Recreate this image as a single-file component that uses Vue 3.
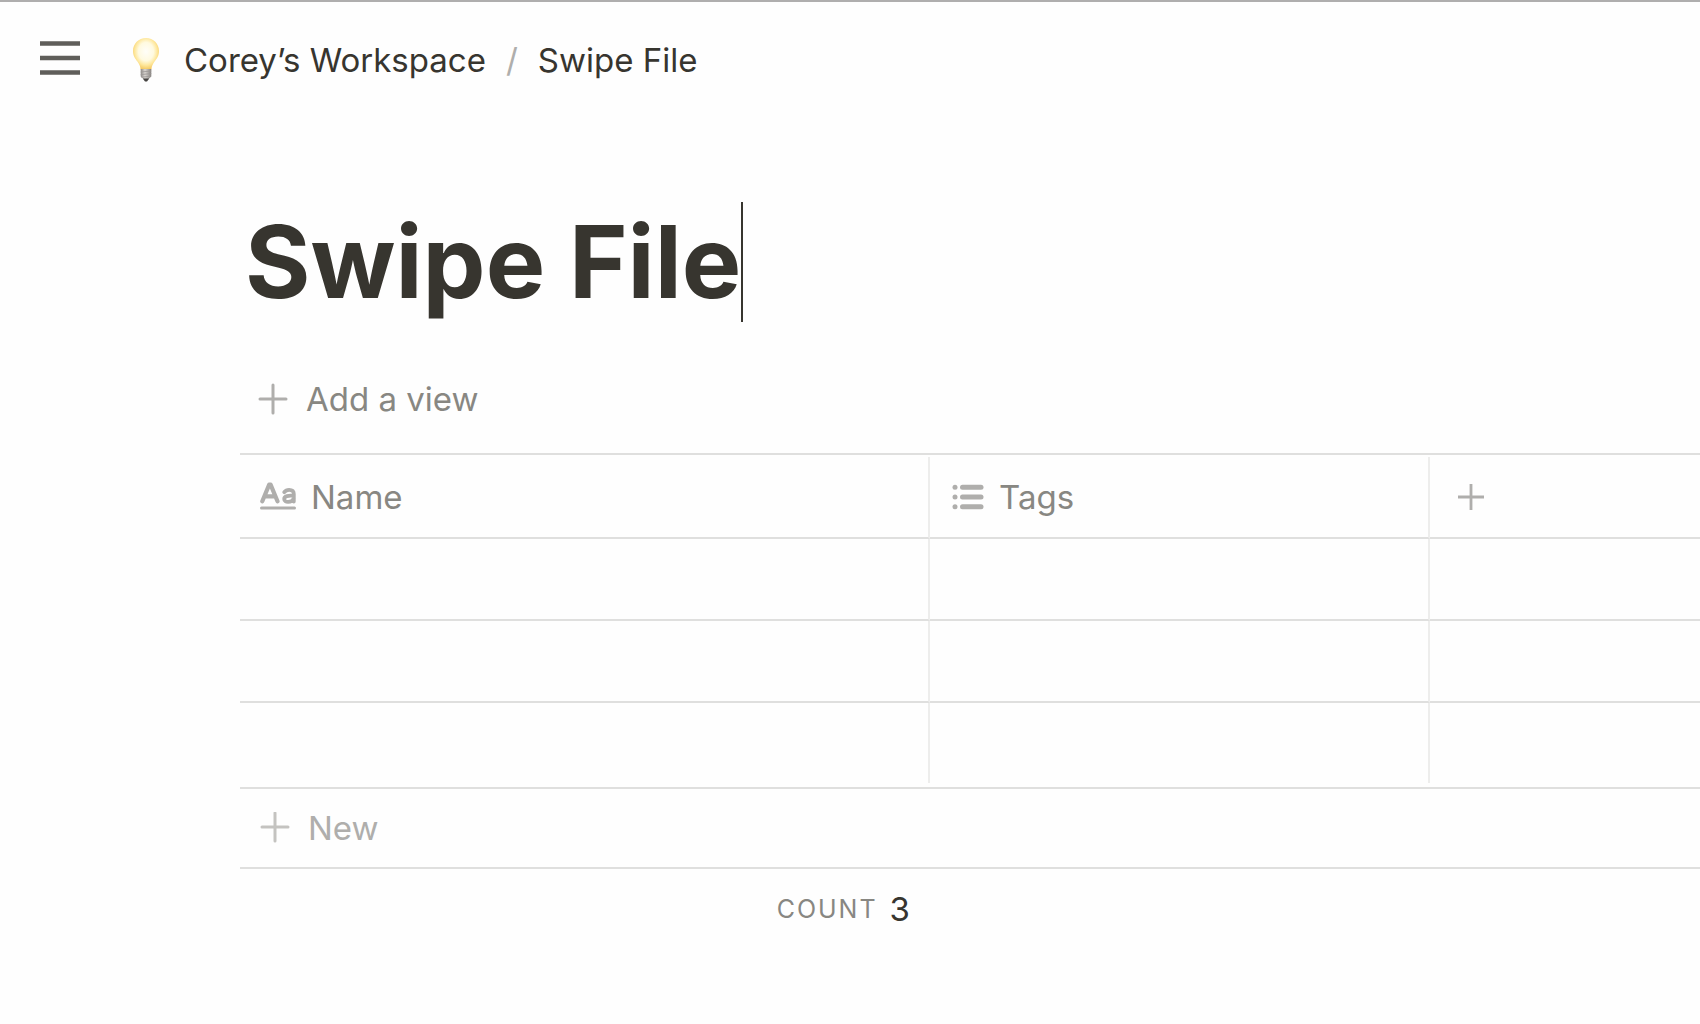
<template>
  <div class="page">
    <header class="topbar">
      <button class="menu-button" type="button" aria-label="Open sidebar">
        <svg width="40" height="34" viewBox="0 0 40 34">
          <path d="M0 2.500h40M0 17h40M0 31.500h40" stroke="#5f5e5a" stroke-width="4.400" />
        </svg>
      </button>
      <nav class="breadcrumb" aria-label="Breadcrumb">
        <a href="#" class="crumb">
          <svg class="bulb" width="28" height="46" viewBox="0 0 28 46">
            <defs>
              <radialGradient id="glass" cx="50%" cy="43%" r="58%">
                <stop offset="0" stop-color="#fffef9" />
                <stop offset="0.5" stop-color="#fffae0" />
                <stop offset="0.75" stop-color="#fee79b" />
                <stop offset="1" stop-color="#f4c65c" />
              </radialGradient>
              <linearGradient id="screw" x1="0" x2="1" y1="0" y2="0">
                <stop offset="0" stop-color="#8d8986" />
                <stop offset="0.4" stop-color="#d9d5d1" />
                <stop offset="1" stop-color="#85817e" />
              </linearGradient>
            </defs>
            <path d="M14 1C6.600 1 1 6.800 1 14c0 4.800 2.200 7.600 4.400 10.600C7.400 27.300 8.200 29 8.600 32.500h10.800c.4-3.500 1.200-5.200 3.200-7.900C24.800 21.600 27 18.800 27 14 27 6.800 21.400 1 14 1z" fill="url(#glass)" />
            <path d="M8.700 32h10.600v7.600l-3.200 2.800h-4.200l-3.200-2.800z" fill="url(#screw)" />
            <path d="M8.700 35l10.600-1M8.700 37.600l10.600-1M9.200 40.200l9.600-1" stroke="#9b9794" stroke-width="0.8" />
            <path d="M10.800 41.500h6.400L15 44.500h-2z" fill="#454341" />
          </svg>
          <span>Corey’s Workspace</span>
        </a>
        <span class="slash">/</span>
        <a href="#" class="crumb">Swipe File</a>
      </nav>
    </header>

    <main class="content">
      <h1 class="title">Swipe File<span class="caret"></span></h1>

      <button class="add-view" type="button">
        <svg width="30" height="32" viewBox="0 0 30 32">
          <path d="M2 16h26M15 2v28" stroke="#afaeac" stroke-width="3" stroke-linecap="round" />
        </svg>
        Add a view
      </button>

      <div class="table-wrap">
        <table class="table">
          <thead>
            <tr>
              <th class="col-name" scope="col">
                <div class="head">
                  <svg width="36" height="30" viewBox="0 0 36 30">
                    <g fill="none" stroke="#afaeac" stroke-width="4.200" stroke-linecap="round" stroke-linejoin="round">
                      <path d="M2.300 19.300L9.200 2.600h1.400L17.500 19.300M5.500 14.300h9" />
                      <path d="M24.300 10.200c1.300-1.800 3-2.300 4.800-2.300 3.200 0 4.700 1.600 4.700 4.200v7.400M33.800 13.800c-5.600-.5-9.600.2-9.600 3.200 0 4 7.400 3.800 9.600-.4" stroke-width="3.800" />
                      <path d="M1.500 26h33" stroke-width="3" />
                    </g>
                  </svg>
                  Name
                </div>
              </th>
              <th class="col-tags" scope="col">
                <div class="head">
                  <svg width="32" height="26" viewBox="0 0 32 26">
                    <g fill="#afaeac">
                      <circle cx="3" cy="3.300" r="2.500" />
                      <circle cx="3" cy="13" r="2.500" />
                      <circle cx="3" cy="22.700" r="2.500" />
                      <rect x="8" y="0.800" width="23.500" height="5" rx="2.500" />
                      <rect x="8" y="10.500" width="23.500" height="5" rx="2.500" />
                      <rect x="8" y="20.200" width="23.500" height="5" rx="2.500" />
                    </g>
                  </svg>
                  Tags
                </div>
              </th>
              <th scope="col">
                <button class="add-column" type="button" aria-label="Add a property">
                  <svg width="26" height="26" viewBox="0 0 26 26">
                    <path d="M0 13h26M13 0v26" stroke="#afaeac" stroke-width="2.800" />
                  </svg>
                </button>
              </th>
            </tr>
          </thead>
          <tbody>
            <tr v-for="row in rows" :key="row.id">
              <td>{{ row.name }}</td>
              <td>{{ row.tags.join(', ') }}</td>
              <td></td>
            </tr>
          </tbody>
        </table>
      </div>

      <button class="new-row" type="button" @click="addRow">
        <svg width="30" height="32" viewBox="0 0 30 32">
          <path d="M2 15h26M15 1v28" stroke="#c4c3c0" stroke-width="3" stroke-linecap="round" />
        </svg>
        New
      </button>

      <div class="summary">
        <span class="summary-label">COUNT</span>
        <span class="summary-value">{{ rows.length }}</span>
      </div>
    </main>
  </div>
</template>

<script setup>
import { ref } from 'vue'

const rows = ref([
  { id: 1, name: '', tags: [] },
  { id: 2, name: '', tags: [] },
  { id: 3, name: '', tags: [] }
])

const addRow = () => {
  rows.value.push({ id: rows.value.length + 1, name: '', tags: [] })
}
</script>

<style>
body {
  background: #fefefe;
}
</style>

<style scoped>
.page {
  min-height: 100vh;
  box-sizing: border-box;
  border-top: 2px solid #afaeae;
  font-family: Inter, "Liberation Sans", sans-serif;
  font-size: 33px;
  line-height: 44px;
  color: #37352f;
}

button {
  padding: 0;
  border: none;
  background: none;
  font: inherit;
  cursor: pointer;
}

svg {
  display: block;
  flex-shrink: 0;
}

.topbar {
  display: flex;
  align-items: flex-start;
  gap: 52px;
  padding: 35px 40px 33px;
}

.menu-button {
  padding-top: 4px;
}

.breadcrumb {
  display: flex;
  align-items: center;
  gap: 20px;
}

.crumb {
  display: flex;
  align-items: center;
  gap: 24px;
  color: inherit;
  text-decoration: none;
}

.slash {
  color: #afaeac;
}

.content {
  padding-left: 240px;
}

.title {
  display: flex;
  align-items: center;
  margin: 0;
  padding: 86px 0 0 5px;
  font-size: 100px;
  line-height: 118px;
  font-weight: 700;
}

.caret {
  width: 2px;
  height: 120px;
  background: #37352f;
}

.add-view {
  display: flex;
  align-items: center;
  gap: 18px;
  margin: 55px 0 32px;
  padding-left: 18px;
  color: #888782;
}

.table-wrap {
  padding: 2px 0 4px;
  border-top: 2px solid #dfdfde;
  border-bottom: 2px solid #dfdfde;
}

.table {
  width: 100%;
  table-layout: fixed;
  border-collapse: separate;
  border-spacing: 0;
}

.table th,
.table td {
  box-sizing: border-box;
  height: 82px;
  padding: 0 20px;
  border-right: 2px solid #ededec;
  border-bottom: 2px solid #dfdfde;
  font-weight: 400;
  text-align: left;
}

.table th {
  color: #888782;
}

.table th:last-child,
.table td:last-child {
  border-right: none;
}

.table tbody tr:last-child td {
  height: 80px;
  border-bottom: none;
}

.table .col-name {
  width: 690px;
}

.table .col-tags {
  width: 500px;
  padding-left: 22px;
}

.head {
  display: flex;
  align-items: center;
  gap: 15px;
}

.add-column {
  display: block;
  padding-left: 8px;
}

.new-row {
  display: flex;
  align-items: center;
  gap: 18px;
  box-sizing: border-box;
  width: 100%;
  height: 80px;
  padding-left: 20px;
  border-bottom: 2px solid #dfdfde;
  color: #afaeac;
}

.summary {
  display: flex;
  align-items: center;
  justify-content: flex-end;
  gap: 12px;
  width: 670px;
  padding-top: 18px;
}

.summary-label {
  font-size: 25px;
  letter-spacing: 2px;
  color: #888782;
}
</style>
